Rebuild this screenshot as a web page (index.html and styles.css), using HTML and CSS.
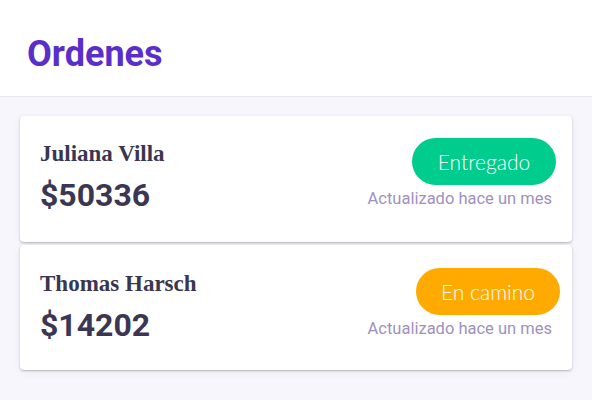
FILE: index.html
```html
<!DOCTYPE html>
<html lang="es">
<head>
<meta charset="utf-8">
<title>Ordenes</title>
<link rel="stylesheet" href="styles.css">
</head>
<body>
<header class="topbar">
  <h1 class="title">Ordenes</h1>
</header>
<main class="list">
  <article class="card">
    <div class="info">
      <div class="name">Juliana Villa</div>
      <div class="amount">$50336</div>
    </div>
    <div class="status">
      <span class="badge badge-done">Entregado</span>
      <span class="updated">Actualizado hace un mes</span>
    </div>
  </article>
  <article class="card card-second">
    <div class="info">
      <div class="name">Thomas Harsch</div>
      <div class="amount">$14202</div>
    </div>
    <div class="status">
      <span class="badge badge-way">En camino</span>
      <span class="updated">Actualizado hace un mes</span>
    </div>
  </article>
</main>
</body>
</html>
```

FILE: styles.css
```css
html, body {
  margin: 0;
  padding: 0;
}
body {
  background: #f7f6fd;
  font-family: Roboto, "Liberation Sans", sans-serif;
  width: 592px;
  height: 400px;
  overflow: hidden;
}
.topbar {
  background: #ffffff;
  height: 97px;
  border-bottom: 1px solid #e7e6ec;
  padding: 33px 0 0 27px;
  box-sizing: border-box;
}
.title {
  margin: 0;
  font-size: 36px;
  line-height: 42px;
  font-weight: 700;
  color: #5a2fc9;
}
.list {
  padding: 19px 20px 0 20px;
  display: flex;
  flex-direction: column;
  gap: 3px;
}
.card {
  background: #ffffff;
  border-radius: 4px;
  height: 126px;
  box-sizing: border-box;
  padding: 22px 20px 0 20px;
  display: flex;
  justify-content: space-between;
  box-shadow: 0 1px 2px rgba(0, 0, 0, 0.24), 0 2px 8px rgba(0, 0, 0, 0.06);
}
.card-second {
  height: 125px;
  padding-top: 23px;
}
.info {
  display: flex;
  flex-direction: column;
}
.name {
  margin-top: 2px;
  font-family: "Liberation Serif", "DejaVu Serif", serif;
  font-weight: 700;
  font-size: 23px;
  line-height: 27px;
  color: #3a3650;
}
.amount {
  margin-top: 9px;
  font-size: 32px;
  line-height: 38px;
  font-weight: 700;
  color: #3b3753;
}
.status {
  display: flex;
  flex-direction: column;
  align-items: flex-end;
}
.badge {
  height: 47px;
  width: 144px;
  border-radius: 24px;
  display: flex;
  align-items: center;
  justify-content: center;
  color: #ffffff;
  font-family: Lato, "Open Sans", sans-serif;
  font-weight: 300;
  font-size: 21px;
  margin-right: -4px;
}
.badge-done {
  background: #00cc8d;
}
.badge-way {
  background: #ffaa00;
  margin-right: -8px;
}
.updated {
  margin-top: 4px;
  font-size: 16.5px;
  line-height: 20px;
  color: #9e91c2;
}
```
